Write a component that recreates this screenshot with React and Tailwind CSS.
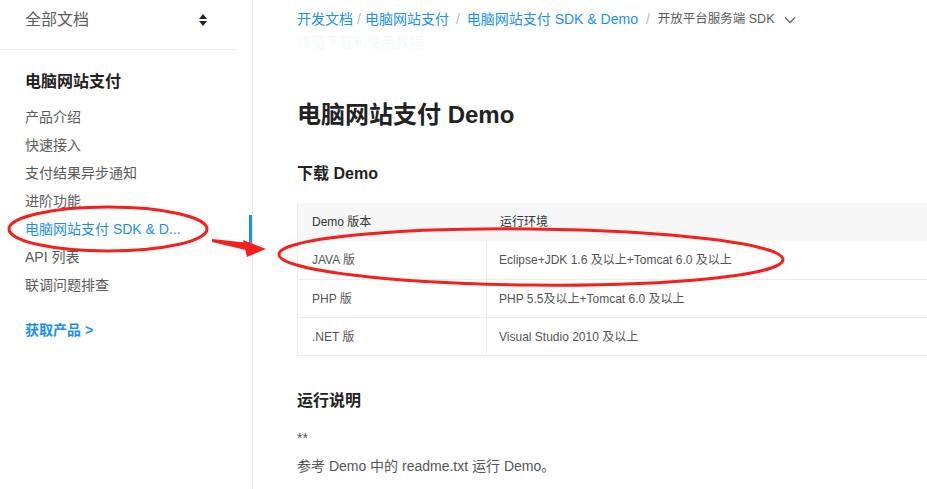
import React from "react";

const FONT = { fontFamily: '"Liberation Sans", "Noto Sans CJK SC", sans-serif' };

function SortIcon() {
  return (
    <svg width="8" height="12" viewBox="0 0 8 12">
      <polygon points="4,0 8,5 0,5" fill="#1f2333" />
      <polygon points="0,7 8,7 4,12" fill="#1f2333" />
    </svg>
  );
}

function Chevron() {
  return (
    <svg width="12" height="8" viewBox="0 0 12 8" className="ml-[9px]">
      <polyline points="1,1.5 6,6.5 11,1.5" fill="none" stroke="#666" strokeWidth="1.3" />
    </svg>
  );
}

const items = [
  "产品介绍",
  "快速接入",
  "支付结果异步通知",
  "进阶功能",
  "电脑网站支付 SDK & D...",
  "API 列表",
  "联调问题排查",
];

const rows = [
  ["JAVA 版", "Eclipse+JDK 1.6 及以上+Tomcat 6.0 及以上"],
  ["PHP 版", "PHP 5.5及以上+Tomcat 6.0 及以上"],
  [".NET 版", "Visual Studio 2010 及以上"],
];

export default function App() {
  return (
    <div className="relative flex h-[489px] w-[927px] overflow-hidden bg-white" style={FONT}>
      {/* Sidebar */}
      <aside className="w-[253px] shrink-0 border-r border-[#e8e8e8]">
        <div className="mr-[15px] flex h-[50px] items-start justify-between border-b border-[#eeeeee] pl-[25px] pr-[30px] pt-[8px]">
          <span className="text-[16px] leading-[24px] text-[#5c5c5c]">全部文档</span>
          <span className="mt-[6px]"><SortIcon /></span>
        </div>
        <div className="mt-[20px] pl-[25px] text-[16px] font-bold leading-[24px] text-[#222]">电脑网站支付</div>
        <ul className="mt-[9px]">
          {items.map((t, i) => (
            <li
              key={t}
              className={
                "relative pl-[25px] text-[14px] leading-[28px] " +
                (i === 4 ? "text-[#1a8ff0]" : "text-[#5a5a5a]")
              }
            >
              {t}
              {i === 4 && <span className="absolute right-0 top-0 h-[28px] w-[3px] bg-[#1890ff]" />}
            </li>
          ))}
        </ul>
        <div className="mt-[17px] pl-[25px] text-[14px] font-bold leading-[28px] text-[#1a8ff0]">获取产品 &gt;</div>
      </aside>

      {/* Main */}
      <main className="relative flex-1 overflow-hidden pl-[44px]">
        <div className="h-[31px]" />
        <div className="text-[14px] leading-[22px] text-[#1890ff]">详见下载和使用教程</div>

        <h1 className="mt-[46px] text-[24px] font-bold leading-[32px] text-[#222]">电脑网站支付 Demo</h1>
        <h3 className="mt-[31px] text-[16px] font-bold leading-[24px] text-[#222]">下载 Demo</h3>

        <div className="mt-[17px] w-[720px] border-l border-b border-[#ececec] text-[12px] text-[#555]">
          <div className="flex h-[38px] items-center bg-[#f7f7f7] text-[#333]">
            <div className="w-[189px] pl-[14px]">Demo 版本</div>
            <div className="pl-[13px]">运行环境</div>
          </div>
          {rows.map((r, i) => (
            <div key={r[0]} className={"flex h-[38px] " + (i > 0 ? "border-t border-[#ececec]" : "")}>
              <div className="flex w-[189px] items-center border-r border-[#ececec] pl-[14px]">{r[0]}</div>
              <div className="flex items-center pl-[12px]">{r[1]}</div>
            </div>
          ))}
        </div>

        <h3 className="mt-[33px] text-[16px] font-bold leading-[24px] text-[#222]">运行说明</h3>
        <p className="mt-[14px] text-[14px] leading-[22px] text-[#555]">**</p>
        <p className="mt-[6px] text-[14px] leading-[22px] text-[#555]">参考 Demo 中的 readme.txt 运行 Demo。</p>

        {/* Sticky breadcrumb header overlaying scrolled content */}
        <div className="absolute left-0 right-0 top-0 flex h-[50px] items-start bg-white/[0.94] pl-[44px] pt-[8px] text-[14px] leading-[22px]">
          <span className="text-[#1890ff]">开发文档</span>
          <span className="mx-[4px] text-[#bbb]">/</span>
          <span className="text-[#1890ff]">电脑网站支付</span>
          <span className="mx-[7px] text-[#bbb]">/</span>
          <span className="text-[#1890ff]">电脑网站支付 SDK &amp; Demo</span>
          <span className="mx-[8px] text-[#bbb]">/</span>
          <span className="text-[12.5px] text-[#595959]">开放平台服务端 SDK</span>
          <span className="mt-[8px]"><Chevron /></span>
        </div>
      </main>

      {/* Red annotations */}
      <svg className="pointer-events-none absolute left-0 top-0" width="927" height="489">
        <ellipse cx="108" cy="229" rx="99" ry="22" fill="none" stroke="#f5201e" strokeWidth="3" />
        <ellipse cx="531" cy="257" rx="252" ry="28" fill="none" stroke="#f5201e" strokeWidth="3" transform="rotate(0.6 531 257)" />
        <polygon points="212,239 250,243 250,251 212,242" fill="#f5201e" />
        <polygon points="243,240 266,249 247,257" fill="#f5201e" />
      </svg>
    </div>
  );
}
